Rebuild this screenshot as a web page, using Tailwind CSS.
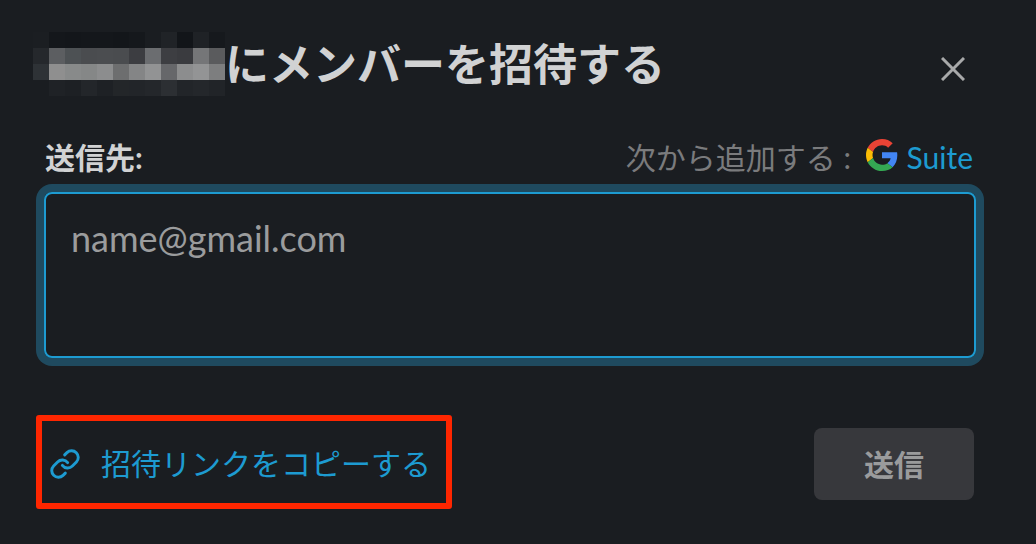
<!DOCTYPE html>
<html lang="ja">

<head>
    <meta charset="UTF-8" />
    <meta name="viewport" content="width=device-width, initial-scale=1.0" />
    <title>メンバーを招待する</title>
    <script src="https://cdn.jsdelivr.net/npm/@tailwindcss/browser@4"></script>
</head>

<body class="bg-[#1a1d21] font-['Lato','Noto_Sans_CJK_JP',sans-serif]">

    <div class="w-[1036px] h-[544px] overflow-hidden pt-8 flex flex-col">

        <!-- title row -->
        <div class="flex items-center h-16 pl-[33px] pr-[71px]">
            <!-- pixelated workspace name -->
            <div class="grid grid-cols-[repeat(12,16px)] grid-rows-[repeat(4,16px)] w-[193px] shrink-0" aria-hidden="true">
                <i class="bg-[#1b1e22]"></i><i class="bg-[#14171b]"></i><i class="bg-[#13161a]"></i><i class="bg-[#14171b]"></i><i class="bg-[#14171b]"></i><i class="bg-[#13161a]"></i><i class="bg-[#15181c]"></i><i class="bg-[#1a1d21]"></i><i class="bg-[#202327]"></i><i class="bg-[#121519]"></i><i class="bg-[#1f2226]"></i><i class="bg-[#16191d]"></i>
                <i class="bg-[#25282c]"></i><i class="bg-[#5c5e61]"></i><i class="bg-[#4d5154]"></i><i class="bg-[#4a4c4f]"></i><i class="bg-[#4b4d50]"></i><i class="bg-[#4a4c4f]"></i><i class="bg-[#3c3d41]"></i><i class="bg-[#6b6d70]"></i><i class="bg-[#3d3e42]"></i><i class="bg-[#3a3b3f]"></i><i class="bg-[#757678]"></i><i class="bg-[#5a5b5d]"></i>
                <i class="bg-[#2e3236]"></i><i class="bg-[#8f8f8f]"></i><i class="bg-[#888a8a]"></i><i class="bg-[#858787]"></i><i class="bg-[#8c8d8e]"></i><i class="bg-[#6d6e6f]"></i><i class="bg-[#848586]"></i><i class="bg-[#929394]"></i><i class="bg-[#66676a]"></i><i class="bg-[#8c8d8e]"></i><i class="bg-[#939495]"></i><i class="bg-[#7d7e7f]"></i>
                <i class="bg-[#1a1d21]"></i><i class="bg-[#1f2226]"></i><i class="bg-[#1d2024]"></i><i class="bg-[#23262a]"></i><i class="bg-[#1e2125]"></i><i class="bg-[#232629]"></i><i class="bg-[#222529]"></i><i class="bg-[#24272b]"></i><i class="bg-[#2c2f33]"></i><i class="bg-[#222529]"></i><i class="bg-[#24272b]"></i><i class="bg-[#212428]"></i>
            </div>
            <h1 class="-ml-[1px] text-[44px] leading-none font-bold text-[#d1d2d3] whitespace-nowrap">にメンバーを招待する</h1>
            <svg class="ml-auto mt-[10px] w-6 h-6" viewBox="0 0 24 24" fill="none" stroke="#a8a9aa" stroke-width="3">
                <path d="M1 1l22 22M23 1L1 23" />
            </svg>
        </div>

        <!-- label row -->
        <div class="flex items-center justify-between h-[42px] mt-[40px] pl-[45px] pr-[63px] leading-none">
            <label class="font-bold text-[30px] text-[#d1d2d3]">送信先:</label>
            <div class="flex items-center text-[#7a7b7d] text-[30px]">
                <span class="whitespace-pre">次から追加する : </span>
                <svg class="w-8 h-8 ml-[7px] mr-[9px] -mt-[4px]" viewBox="0 0 48 48">
                    <path fill="#EA4335" d="M24 9.5c3.54 0 6.71 1.22 9.21 3.6l6.85-6.85C35.9 2.38 30.47 0 24 0 14.62 0 6.51 5.38 2.56 13.22l7.98 6.19C12.43 13.72 17.74 9.5 24 9.5z" />
                    <path fill="#4285F4" d="M46.98 24.55c0-1.57-.15-3.09-.38-4.55H24v9.02h12.94c-.58 2.96-2.26 5.48-4.78 7.18l7.73 6c4.51-4.18 7.09-10.36 7.09-17.65z" />
                    <path fill="#FBBC05" d="M10.53 28.59c-.48-1.45-.76-2.99-.76-4.59s.27-3.14.76-4.59l-7.98-6.19C.92 16.46 0 20.12 0 24c0 3.88.92 7.54 2.56 10.78l7.97-6.19z" />
                    <path fill="#34A853" d="M24 48c6.48 0 11.93-2.13 15.89-5.81l-7.73-6c-2.15 1.45-4.92 2.3-8.16 2.3-6.26 0-11.57-4.22-13.47-9.91l-7.98 6.19C6.51 42.62 14.62 48 24 48z" />
                </svg>
                <span class="text-[#1d9bd1] text-[30px]">Suite</span>
            </div>
        </div>

        <!-- address input -->
        <div class="ml-[44px] mt-[14px] w-[932px] h-[166px] shrink-0 rounded-lg border-2 border-[#1d9bd1] ring-[8px] ring-[#1f4a5f] px-[25px] pt-[22px] text-[36px] leading-[44px] text-[#9b9c9d]">
            name@gmail.com
        </div>

        <!-- footer -->
        <div class="flex items-start justify-between mt-[57px] pl-[36px] pr-[62px]">
            <a class="flex items-center w-[416px] h-[94px] border-[6px] border-[#ff2600] rounded-[3px] pt-[3px] pl-[7px] text-[#1d9bd1] text-[30px] whitespace-nowrap">
                <svg class="w-8 h-8 mr-[20px]" viewBox="0 0 24 24" fill="none" stroke="#1d9bd1" stroke-width="2.2" stroke-linecap="round" stroke-linejoin="round">
                    <path d="M10 13a5 5 0 0 0 7.54.54l3-3a5 5 0 0 0-7.07-7.07l-1.72 1.71" />
                    <path d="M14 11a5 5 0 0 0-7.54-.54l-3 3a5 5 0 0 0 7.07 7.07l1.71-1.71" />
                </svg>
                招待リンクをコピーする
            </a>
            <button class="mt-[13px] w-40 h-[72px] rounded-lg bg-[#37383c] text-[#9a9b9c] text-[30px] font-bold">送信</button>
        </div>
    </div>

</body>

</html>
